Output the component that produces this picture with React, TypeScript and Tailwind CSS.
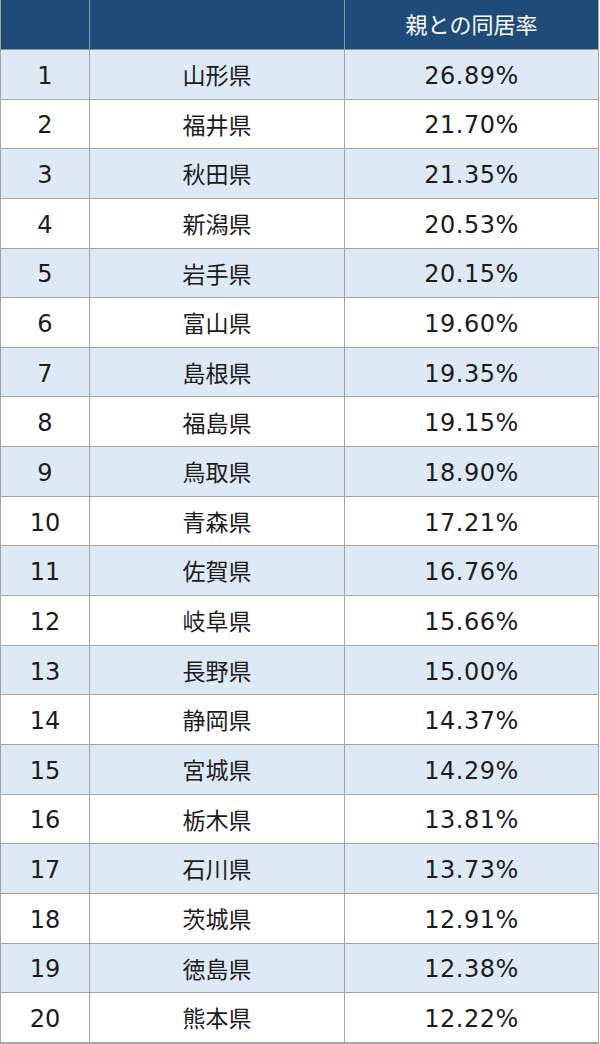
const rows: [number, string, string][] = [
  [1, "山形県", "26.89%"],
  [2, "福井県", "21.70%"],
  [3, "秋田県", "21.35%"],
  [4, "新潟県", "20.53%"],
  [5, "岩手県", "20.15%"],
  [6, "富山県", "19.60%"],
  [7, "島根県", "19.35%"],
  [8, "福島県", "19.15%"],
  [9, "鳥取県", "18.90%"],
  [10, "青森県", "17.21%"],
  [11, "佐賀県", "16.76%"],
  [12, "岐阜県", "15.66%"],
  [13, "長野県", "15.00%"],
  [14, "静岡県", "14.37%"],
  [15, "宮城県", "14.29%"],
  [16, "栃木県", "13.81%"],
  [17, "石川県", "13.73%"],
  [18, "茨城県", "12.91%"],
  [19, "徳島県", "12.38%"],
  [20, "熊本県", "12.22%"],
];

const num = { fontFamily: '"DejaVu Sans", "Noto Sans", sans-serif' };

export default function App() {
  return (
    <div
      className="w-[600px] h-[1044px] bg-white text-[#1c1c1c]"
      style={{ fontFamily: '"Noto Sans CJK JP", "Noto Sans", sans-serif' }}
    >
      <div className="w-[599px] border-l border-r border-b border-[#a3a3a3]">
        <div className="grid grid-cols-[89px_255px_1fr] h-[50px] bg-[#1f4b78] text-white text-[22px] border-b border-[#8a96a3]">
          <div className="border-r border-[#8a96a3]" />
          <div className="border-r border-[#8a96a3]" />
          <div className="flex items-center justify-center pb-[3px]">親との同居率</div>
        </div>
        {rows.map(([rank, name, rate], i) => (
          <div
            key={rank}
            className={
              "grid grid-cols-[89px_255px_1fr] h-[49.65px] border-b border-[#a3a3a3] " +
              (i % 2 === 0 ? "bg-[#ddeaf6]" : "bg-white")
            }
          >
            <div className="flex items-center justify-center border-r border-[#a3a3a3] text-[24px] pt-[3px]" style={num}>
              {rank}
            </div>
            <div className="flex items-center justify-center border-r border-[#a3a3a3] text-[23px]">{name}</div>
            <div className="flex items-center justify-center text-[24px] tracking-[0.5px] pt-[3px]" style={num}>
              {rate}
            </div>
          </div>
        ))}
      </div>
    </div>
  );
}
